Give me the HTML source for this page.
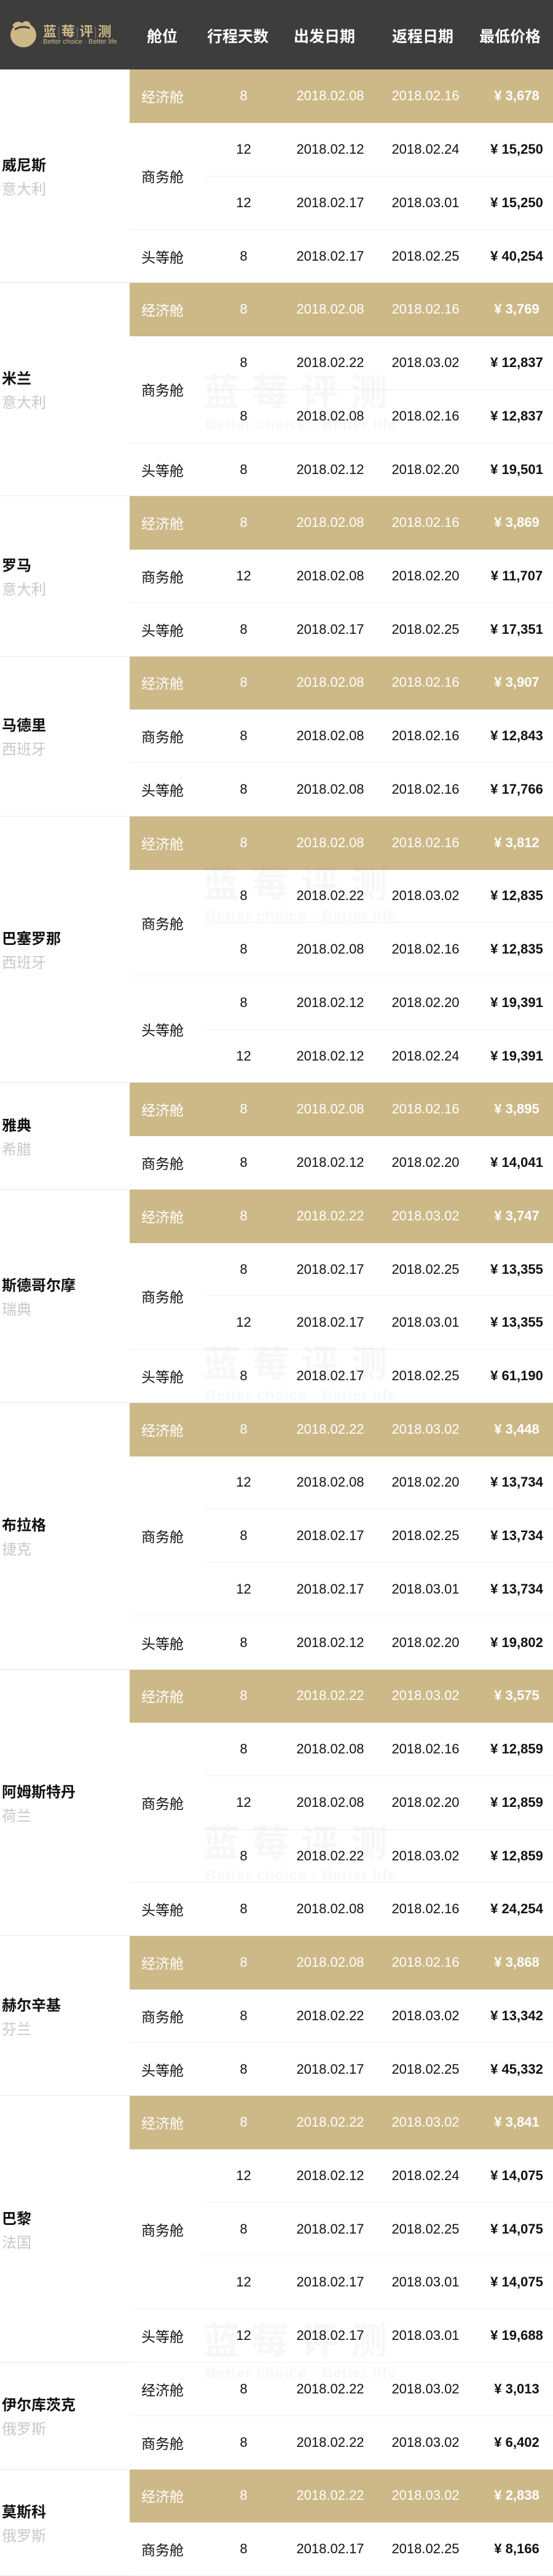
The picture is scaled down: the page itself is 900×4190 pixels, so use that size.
<!DOCTYPE html>
<html><head><meta charset="utf-8">
<style>
*{margin:0;padding:0;box-sizing:border-box}
body{width:900px;height:4190px;background:#fff;font-family:"Liberation Sans","Noto Sans CJK SC",sans-serif;position:relative;overflow:hidden}
.hd{height:113px;background:#3d3d3d;position:relative;color:#fff}
.hd .h{position:absolute;top:40px;font-size:25px;font-weight:bold;transform:translateX(-50%);white-space:nowrap}
table{border-collapse:collapse;width:900px;table-layout:fixed}
td{height:86.74px;border-bottom:1px solid #efefef;font-size:22px;color:#111;text-align:center;vertical-align:middle;padding:0}
td.c{text-align:left;padding-left:3px;border-bottom:1px solid #e8e8e8}
td.c b{display:block;font-size:24px;color:#111}
td.c span{display:block;font-size:24px;color:#c8c8c8;margin-top:4px}
td.k{text-align:left;padding-left:19px;font-size:23px}
td.p{font-weight:bold;padding-left:12px}
tr.g td:not(.c){background:#cdb988;color:#fff;border-bottom-color:#cdb988}
.wm{position:absolute;left:300px;width:380px;text-align:center;color:rgba(0,0,0,0.03);font-size:60px;font-weight:bold;letter-spacing:20px;pointer-events:none;white-space:nowrap}
.wm small{display:block;font-size:24px;letter-spacing:1px;white-space:nowrap}
</style></head><body>
<div class="hd">
<svg style="position:absolute;left:14px;top:28px" width="50" height="50" viewBox="0 0 50 50"><ellipse cx="24" cy="29" rx="21" ry="20" fill="#cdb988"/><path d="M6 14 C10 6 18 6 22 10 C26 4 34 6 36 12 C30 10 24 14 18 14 C12 14 8 16 6 14Z" fill="#cdb988"/><path d="M10 20 C16 16 26 14 34 18" stroke="#3d3d3d" stroke-width="3" fill="none"/></svg>
<div style="position:absolute;left:70px;top:34px;color:#cdb988;font-size:22px;font-weight:bold;letter-spacing:1px">蓝<span style="color:#666;font-weight:normal">|</span>莓<span style="color:#666;font-weight:normal">|</span>评<span style="color:#666;font-weight:normal">|</span>测</div>
<div style="position:absolute;left:70px;top:62px;color:#cdb988;font-size:11px;white-space:nowrap">Better choice · Better life</div>
<div class="h" style="left:264px">舱位</div>
<div class="h" style="left:387px">行程天数</div>
<div class="h" style="left:528px">出发日期</div>
<div class="h" style="left:688px">返程日期</div>
<div class="h" style="left:830px">最低价格</div>
</div>
<table>
<colgroup><col style="width:211px"><col style="width:122px"><col style="width:127px"><col style="width:155px"><col style="width:155px"><col style="width:130px"></colgroup>
<tr class="g"><td class="c" rowspan="4"><b>威尼斯</b><span>意大利</span></td><td class="k">经济舱</td><td>8</td><td>2018.02.08</td><td>2018.02.16</td><td class="p">¥ 3,678</td></tr>
<tr><td class="k" rowspan="2">商务舱</td><td>12</td><td>2018.02.12</td><td>2018.02.24</td><td class="p">¥ 15,250</td></tr>
<tr><td>12</td><td>2018.02.17</td><td>2018.03.01</td><td class="p">¥ 15,250</td></tr>
<tr><td class="k">头等舱</td><td>8</td><td>2018.02.17</td><td>2018.02.25</td><td class="p">¥ 40,254</td></tr>

<tr class="g"><td class="c" rowspan="4"><b>米兰</b><span>意大利</span></td><td class="k">经济舱</td><td>8</td><td>2018.02.08</td><td>2018.02.16</td><td class="p">¥ 3,769</td></tr>
<tr><td class="k" rowspan="2">商务舱</td><td>8</td><td>2018.02.22</td><td>2018.03.02</td><td class="p">¥ 12,837</td></tr>
<tr><td>8</td><td>2018.02.08</td><td>2018.02.16</td><td class="p">¥ 12,837</td></tr>
<tr><td class="k">头等舱</td><td>8</td><td>2018.02.12</td><td>2018.02.20</td><td class="p">¥ 19,501</td></tr>

<tr class="g"><td class="c" rowspan="3"><b>罗马</b><span>意大利</span></td><td class="k">经济舱</td><td>8</td><td>2018.02.08</td><td>2018.02.16</td><td class="p">¥ 3,869</td></tr>
<tr><td class="k">商务舱</td><td>12</td><td>2018.02.08</td><td>2018.02.20</td><td class="p">¥ 11,707</td></tr>
<tr><td class="k">头等舱</td><td>8</td><td>2018.02.17</td><td>2018.02.25</td><td class="p">¥ 17,351</td></tr>

<tr class="g"><td class="c" rowspan="3"><b>马德里</b><span>西班牙</span></td><td class="k">经济舱</td><td>8</td><td>2018.02.08</td><td>2018.02.16</td><td class="p">¥ 3,907</td></tr>
<tr><td class="k">商务舱</td><td>8</td><td>2018.02.08</td><td>2018.02.16</td><td class="p">¥ 12,843</td></tr>
<tr><td class="k">头等舱</td><td>8</td><td>2018.02.08</td><td>2018.02.16</td><td class="p">¥ 17,766</td></tr>

<tr class="g"><td class="c" rowspan="5"><b>巴塞罗那</b><span>西班牙</span></td><td class="k">经济舱</td><td>8</td><td>2018.02.08</td><td>2018.02.16</td><td class="p">¥ 3,812</td></tr>
<tr><td class="k" rowspan="2">商务舱</td><td>8</td><td>2018.02.22</td><td>2018.03.02</td><td class="p">¥ 12,835</td></tr>
<tr><td>8</td><td>2018.02.08</td><td>2018.02.16</td><td class="p">¥ 12,835</td></tr>
<tr><td class="k" rowspan="2">头等舱</td><td>8</td><td>2018.02.12</td><td>2018.02.20</td><td class="p">¥ 19,391</td></tr>
<tr><td>12</td><td>2018.02.12</td><td>2018.02.24</td><td class="p">¥ 19,391</td></tr>

<tr class="g"><td class="c" rowspan="2"><b>雅典</b><span>希腊</span></td><td class="k">经济舱</td><td>8</td><td>2018.02.08</td><td>2018.02.16</td><td class="p">¥ 3,895</td></tr>
<tr><td class="k">商务舱</td><td>8</td><td>2018.02.12</td><td>2018.02.20</td><td class="p">¥ 14,041</td></tr>

<tr class="g"><td class="c" rowspan="4"><b>斯德哥尔摩</b><span>瑞典</span></td><td class="k">经济舱</td><td>8</td><td>2018.02.22</td><td>2018.03.02</td><td class="p">¥ 3,747</td></tr>
<tr><td class="k" rowspan="2">商务舱</td><td>8</td><td>2018.02.17</td><td>2018.02.25</td><td class="p">¥ 13,355</td></tr>
<tr><td>12</td><td>2018.02.17</td><td>2018.03.01</td><td class="p">¥ 13,355</td></tr>
<tr><td class="k">头等舱</td><td>8</td><td>2018.02.17</td><td>2018.02.25</td><td class="p">¥ 61,190</td></tr>

<tr class="g"><td class="c" rowspan="5"><b>布拉格</b><span>捷克</span></td><td class="k">经济舱</td><td>8</td><td>2018.02.22</td><td>2018.03.02</td><td class="p">¥ 3,448</td></tr>
<tr><td class="k" rowspan="3">商务舱</td><td>12</td><td>2018.02.08</td><td>2018.02.20</td><td class="p">¥ 13,734</td></tr>
<tr><td>8</td><td>2018.02.17</td><td>2018.02.25</td><td class="p">¥ 13,734</td></tr>
<tr><td>12</td><td>2018.02.17</td><td>2018.03.01</td><td class="p">¥ 13,734</td></tr>
<tr><td class="k">头等舱</td><td>8</td><td>2018.02.12</td><td>2018.02.20</td><td class="p">¥ 19,802</td></tr>

<tr class="g"><td class="c" rowspan="5"><b>阿姆斯特丹</b><span>荷兰</span></td><td class="k">经济舱</td><td>8</td><td>2018.02.22</td><td>2018.03.02</td><td class="p">¥ 3,575</td></tr>
<tr><td class="k" rowspan="3">商务舱</td><td>8</td><td>2018.02.08</td><td>2018.02.16</td><td class="p">¥ 12,859</td></tr>
<tr><td>12</td><td>2018.02.08</td><td>2018.02.20</td><td class="p">¥ 12,859</td></tr>
<tr><td>8</td><td>2018.02.22</td><td>2018.03.02</td><td class="p">¥ 12,859</td></tr>
<tr><td class="k">头等舱</td><td>8</td><td>2018.02.08</td><td>2018.02.16</td><td class="p">¥ 24,254</td></tr>

<tr class="g"><td class="c" rowspan="3"><b>赫尔辛基</b><span>芬兰</span></td><td class="k">经济舱</td><td>8</td><td>2018.02.08</td><td>2018.02.16</td><td class="p">¥ 3,868</td></tr>
<tr><td class="k">商务舱</td><td>8</td><td>2018.02.22</td><td>2018.03.02</td><td class="p">¥ 13,342</td></tr>
<tr><td class="k">头等舱</td><td>8</td><td>2018.02.17</td><td>2018.02.25</td><td class="p">¥ 45,332</td></tr>

<tr class="g"><td class="c" rowspan="5"><b>巴黎</b><span>法国</span></td><td class="k">经济舱</td><td>8</td><td>2018.02.22</td><td>2018.03.02</td><td class="p">¥ 3,841</td></tr>
<tr><td class="k" rowspan="3">商务舱</td><td>12</td><td>2018.02.12</td><td>2018.02.24</td><td class="p">¥ 14,075</td></tr>
<tr><td>8</td><td>2018.02.17</td><td>2018.02.25</td><td class="p">¥ 14,075</td></tr>
<tr><td>12</td><td>2018.02.17</td><td>2018.03.01</td><td class="p">¥ 14,075</td></tr>
<tr><td class="k">头等舱</td><td>12</td><td>2018.02.17</td><td>2018.03.01</td><td class="p">¥ 19,688</td></tr>

<tr><td class="c" rowspan="2"><b>伊尔库茨克</b><span>俄罗斯</span></td><td class="k">经济舱</td><td>8</td><td>2018.02.22</td><td>2018.03.02</td><td class="p">¥ 3,013</td></tr>
<tr><td class="k">商务舱</td><td>8</td><td>2018.02.22</td><td>2018.03.02</td><td class="p">¥ 6,402</td></tr>

<tr class="g"><td class="c" rowspan="2"><b>莫斯科</b><span>俄罗斯</span></td><td class="k">经济舱</td><td>8</td><td>2018.02.22</td><td>2018.03.02</td><td class="p">¥ 2,838</td></tr>
<tr><td class="k">商务舱</td><td>8</td><td>2018.02.17</td><td>2018.02.25</td><td class="p">¥ 8,166</td></tr>
</table>
<div class="wm" style="top:590px">蓝莓评测<small>Better choice · Better life</small></div>
<div class="wm" style="top:1390px">蓝莓评测<small>Better choice · Better life</small></div>
<div class="wm" style="top:2170px">蓝莓评测<small>Better choice · Better life</small></div>
<div class="wm" style="top:2950px">蓝莓评测<small>Better choice · Better life</small></div>
<div class="wm" style="top:3760px">蓝莓评测<small>Better choice · Better life</small></div>
</body></html>
